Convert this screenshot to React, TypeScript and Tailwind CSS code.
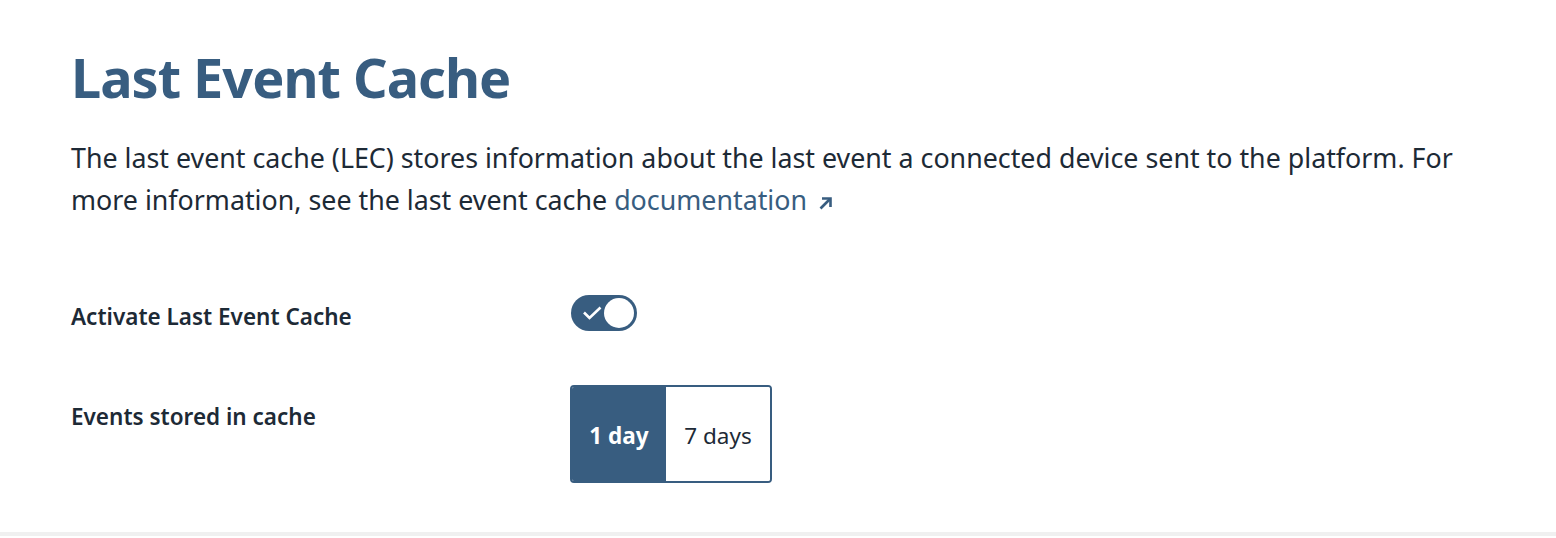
import { useState } from "react";

export default function App() {
  const [active, setActive] = useState(true);
  const [retention, setRetention] = useState("1");

  return (
    <div className="w-[1556px] h-[538px] bg-white flex flex-col" style={{ fontFamily: '"Noto Sans", "Open Sans", sans-serif' }}>
      <div className="flex-1 px-[71px] pt-[42px]">
        <h1 className="text-[54px] leading-[70px] font-bold tracking-[-1px] text-[#385d80]">Last Event Cache</h1>

        <p className="mt-[25px] text-[26.8px] leading-[42px] text-[#1d2a36] max-w-[1420px]">
          The last event cache (LEC) stores information about the last event a connected device sent to the platform. For
          more information, see the last event cache{" "}
          <a href="#" className="text-[#385d80]">
            documentation
            <svg width="13" height="13" viewBox="0 0 13 13" className="inline-block ml-[12px] align-baseline">
              <path d="M3 1.5h8.5V10" fill="none" stroke="#385d80" strokeWidth="2.6" />
              <path d="M11 2L1.5 11.5" fill="none" stroke="#385d80" strokeWidth="2.6" />
            </svg>
          </a>
        </p>

        <div className="mt-[72px] flex items-center">
          <div className="w-[500px] pt-[7px] text-[22.5px] font-semibold text-[#1d2a36]">Activate Last Event Cache</div>
          <button
            onClick={() => setActive(!active)}
            className={"w-[66px] h-[36px] rounded-full flex items-center px-[3px] " + (active ? "bg-[#385d80] justify-end" : "bg-[#8c9ba5] justify-start")}
          >
            {active && (
              <svg width="20" height="14" viewBox="0 0 20 14" className="mr-auto ml-[8px]">
                <path d="M2 6.5l5.5 5.5L18.5 1.5" fill="none" stroke="white" strokeWidth="2.6" />
              </svg>
            )}
            <span className="w-[30px] h-[30px] rounded-full bg-white block" />
          </button>
        </div>

        <div className="mt-[51px] flex items-start">
          <div className="w-[499px] pt-[15px] text-[22.5px] font-semibold text-[#1d2a36]">Events stored in cache</div>
          <div className="flex border-2 border-[#385d80] rounded-[4px] overflow-hidden h-[98px]">
            <button
              onClick={() => setRetention("1")}
              className={"w-[94px] pt-[4px] text-[22.5px] " + (retention === "1" ? "bg-[#385d80] text-white font-bold" : "bg-white text-[#1d2a36]")}
            >
              1 day
            </button>
            <button
              onClick={() => setRetention("7")}
              className={"w-[104px] pt-[4px] text-[22.5px] " + (retention === "7" ? "bg-[#385d80] text-white font-bold" : "bg-white text-[#1d2a36]")}
            >
              7 days
            </button>
          </div>
        </div>
      </div>
      <div className="h-[4px] bg-[#f0f0f0] mb-[2px]" />
    </div>
  );
}
